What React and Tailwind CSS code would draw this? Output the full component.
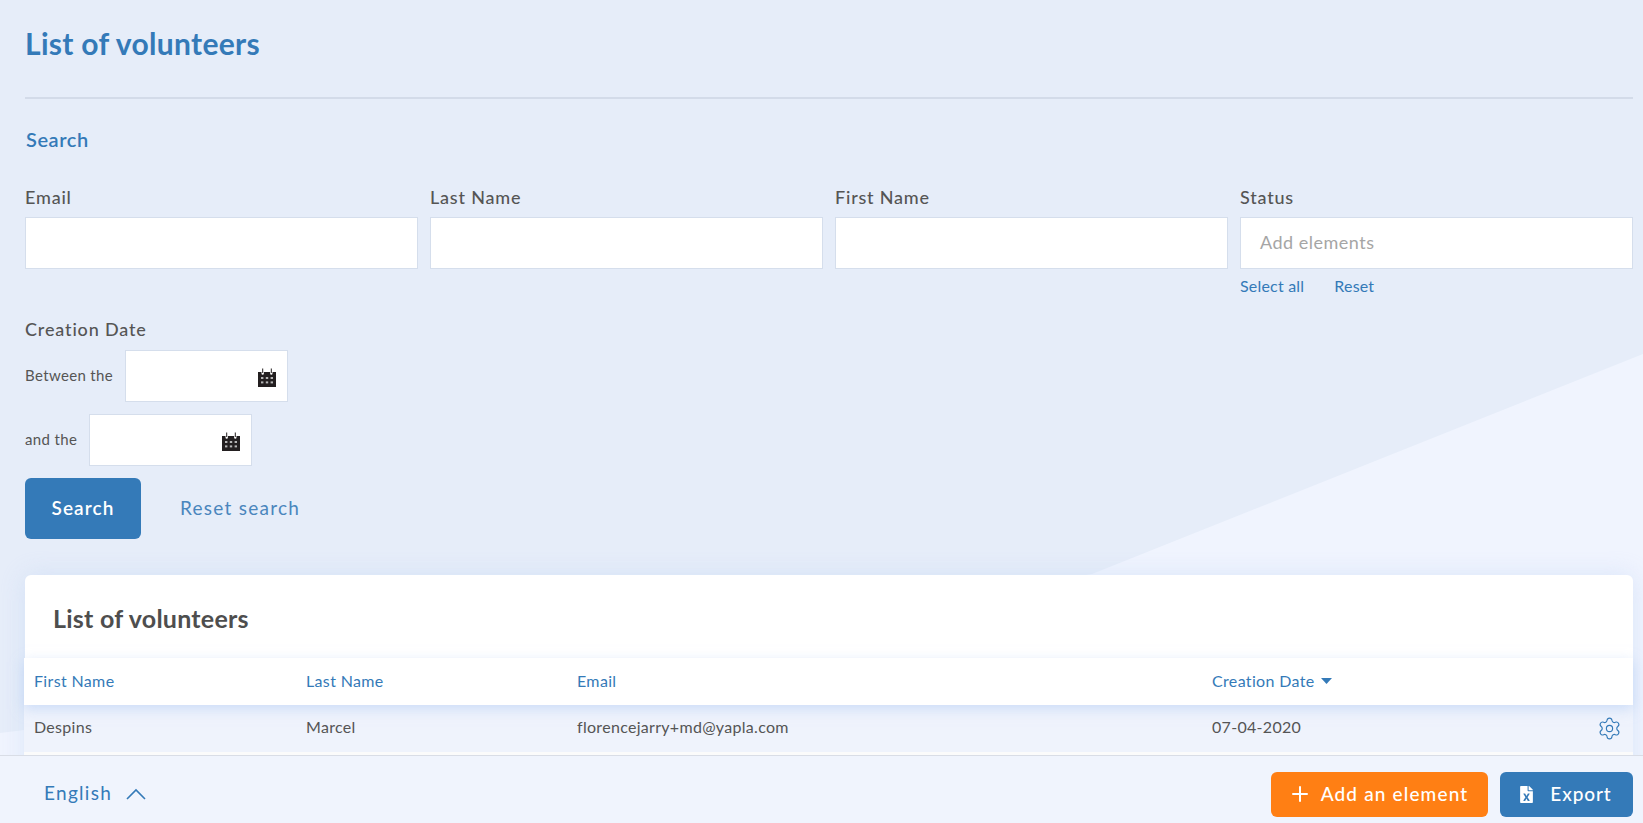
import { Plus, Settings } from "lucide-react";
import { FaFileExcel } from "react-icons/fa";

function CalendarIcon() {
  return (
    <svg width="18" height="19" viewBox="0 0 18 19" className="shrink-0 mt-[2px]">
      <path
        fill="#231f20"
        d="M0 4h3.5v1.600a1.200 1.200 0 0 0 2.400 0V4h6.200v1.600a1.200 1.200 0 0 0 2.400 0V4H18v15H0z"
      />
      <path fill="#231f20" d="M4.200 0.500h1v4.500h-1zM12.800 0.500h1v4.500h-1z" />
      <g fill="#b5b5b5">
        <rect x="3" y="9" width="2.4" height="2" />
        <rect x="7.8" y="9" width="2.4" height="2" />
        <rect x="12.6" y="9" width="2.4" height="2" />
        <rect x="3" y="13.4" width="2.4" height="2" />
        <rect x="7.8" y="13.4" width="2.4" height="2" />
        <rect x="12.6" y="13.4" width="2.4" height="2" />
      </g>
    </svg>
  );
}

function Field({ label, children }) {
  return (
    <div className="flex-1 min-w-0">
      <label className="block h-[32px] text-[18px] leading-[24px] tracking-[0.8px] font-medium text-[#555]">
        {label}
      </label>
      {children}
    </div>
  );
}

function TextBox({ placeholder }) {
  return (
    <div className="h-[52px] bg-white border border-[#d5deec] flex items-center px-[19px] pb-[2px] text-[18px] tracking-[0.5px] text-[#a5a5a5]">
      {placeholder}
    </div>
  );
}

function DateRow({ label }) {
  return (
    <div className="flex items-center gap-3 h-[52px]">
      <span className="pb-[2px] text-[15px] tracking-[0.35px] text-[#555]">{label}</span>
      <div className="w-[163px] h-[52px] bg-white border border-[#d5deec] flex items-center justify-end pr-[11px]">
        <CalendarIcon />
      </div>
    </div>
  );
}

export default function App() {
  return (
    <div className="relative w-full h-[823px] overflow-hidden flex flex-col bg-[#e6edf9] font-['Lato','Liberation_Sans',sans-serif]">
      {/* pale shape behind the page */}
      <svg className="absolute inset-0 w-full h-full" viewBox="0 0 1643 823" preserveAspectRatio="none">
        <polygon fill="#f0f4fe" points="1643,354 1092,574 600,660 0,733 0,823 1643,823" />
      </svg>

      <main className="relative flex-1 min-h-0 overflow-hidden pl-[25px] pr-[10px]">
        <h1 className="pt-[22px] h-[99px] text-[30px] leading-[42px] tracking-[0.3px] font-bold text-[#347ab8] border-b-2 border-[#d3dbe9]">
          List of volunteers
        </h1>

        <h2 className="mt-[28px] ml-px text-[20px] leading-[24px] tracking-[0.55px] font-semibold text-[#347ab8]">
          Search
        </h2>

        <div className="mt-[34px] flex gap-3">
          <Field label="Email"><TextBox /></Field>
          <Field label="Last Name"><TextBox /></Field>
          <Field label="First Name"><TextBox /></Field>
          <Field label="Status">
            <TextBox placeholder="Add elements" />
            <div className="mt-[7px] flex gap-[30px] text-[16px] leading-[20px] tracking-[0.2px] text-[#347ab8]">
              <span>Select all</span>
              <span>Reset</span>
            </div>
          </Field>
        </div>

        <div className="mt-[21px] text-[18px] leading-[24px] tracking-[0.85px] font-medium text-[#555]">
          Creation Date
        </div>
        <div className="mt-[9px] flex flex-col gap-3">
          <DateRow label="Between the" />
          <DateRow label="and the" />
        </div>

        <div className="mt-3 flex items-center gap-[39px]">
          <button className="w-[116px] h-[61px] rounded-md bg-[#347ab8] text-white text-[19px] tracking-[1.1px] font-semibold">
            Search
          </button>
          <span className="text-[19px] tracking-[1.25px] text-[#4a86bd]">Reset search</span>
        </div>

        <section className="mt-[36px] bg-white rounded-md shadow-[0_0_24px_rgba(190,210,245,0.45)]">
          <h2 className="px-7 pt-[26px] h-[83px] text-[25px] leading-[34px] tracking-[0.25px] font-bold text-[#4e4e4e]">
            List of volunteers
          </h2>
          <div className="-ml-px">
            <div className="relative flex items-center h-[47px] pb-[2px] bg-white text-[16px] tracking-[0.35px] text-[#347ab8] shadow-[0_4px_12px_rgba(180,205,245,0.6)]">
              <span className="pl-[10px] w-[282px]">First Name</span>
              <span className="w-[271px]">Last Name</span>
              <span className="w-[635px]">Email</span>
              <span className="flex items-center gap-[6px]">
                Creation Date
                <svg width="11" height="6" viewBox="0 0 11 6"><path d="M0 0h11L5.500 6z" fill="#347ab8" /></svg>
              </span>
            </div>
            <div className="flex items-center h-[47px] pb-[3px] bg-[#eff3fc] text-[16px] tracking-[0.3px] text-[#555]">
              <span className="pl-[10px] w-[282px]">Despins</span>
              <span className="w-[271px]">Marcel</span>
              <span className="w-[635px]">florencejarry+md@yapla.com</span>
              <span className="flex-1">07-04-2020</span>
              <Settings size={25} strokeWidth={1.1} className="mr-[11px] mt-[3px] text-[#347ab8]" />
            </div>
            <div className="h-[47px] bg-[#fbfbfb]" />
          </div>
        </section>
      </main>

      <footer className="relative shrink-0 h-[68px] bg-[#f0f4fd] border-t border-[#d9dde6] flex items-center pl-[44px] pr-[10px]">
        <span className="mt-2 text-[19px] tracking-[1.3px] text-[#347ab8]">English</span>
        <svg width="20" height="12" viewBox="0 0 20 12" className="mt-2 ml-[14px]">
          <polyline points="1,11 10,2 19,11" fill="none" stroke="#347ab8" strokeWidth="1.6" />
        </svg>
        <button className="ml-auto w-[217px] h-[45px] mt-[9px] pr-[3px] rounded-md bg-[#ff7f14] text-white text-[19px] tracking-[1.15px] font-medium flex items-center justify-center gap-[9px]">
          <Plus size={24} strokeWidth={2} />
          Add an element
        </button>
        <button className="ml-3 w-[133px] h-[45px] mt-[9px] rounded-md bg-[#347ab8] text-white text-[19px] tracking-[0.9px] font-medium flex items-center justify-center gap-[15px] pr-[3px]">
          <FaFileExcel size={17} />
          Export
        </button>
      </footer>
    </div>
  );
}
